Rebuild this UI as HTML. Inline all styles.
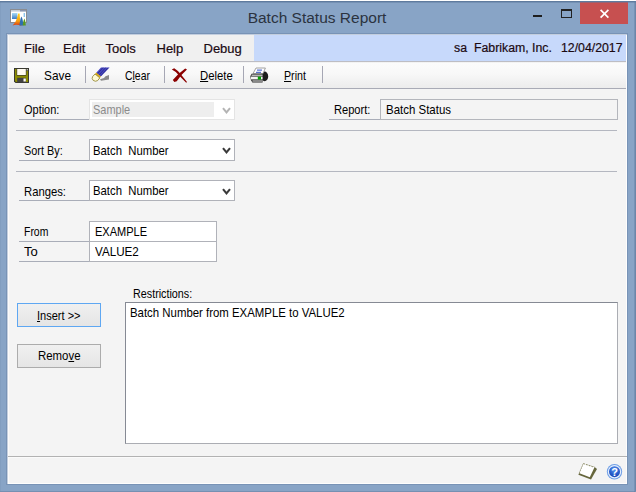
<!DOCTYPE html>
<html>
<head>
<meta charset="utf-8">
<title>Batch Status Report</title>
<style>
html,body{margin:0;padding:0;}
body{width:636px;height:492px;overflow:hidden;background:#88a4c6;font-family:"Liberation Sans",sans-serif;font-size:11px;color:#000;position:relative;}
.abs{position:absolute;}
#title{position:absolute;left:0;top:0;width:636px;height:34px;}
#title .txt{position:absolute;left:-1px;width:636px;top:8px;text-align:center;font-size:15.5px;line-height:20px;color:#2b3340;}
#close{position:absolute;left:580px;top:2px;width:48px;height:22px;background:#c75050;}
#client{position:absolute;left:7px;top:34px;width:620px;height:450px;background:#f4f4f4;overflow:hidden;}
#menubar{position:absolute;left:0;top:0;width:620px;height:27px;background:#f0f0f0;}
#menubar .blue{position:absolute;left:247px;top:0;width:373px;height:27px;background:#c7d9fb;}
.mi{position:absolute;top:7px;font-size:13px;line-height:15px;color:#1b0a12;white-space:nowrap;-webkit-text-stroke:0.2px #1b0a12;}
.ms{font-size:12.3px;}
#toolbar{position:absolute;left:0;top:27px;width:620px;height:26px;background:linear-gradient(#eeeeee 0,#fbfbfb 1.5px,#f8f8f8 45%,#ececec);border-top:1px solid #bdbdc3;border-bottom:1px solid #a9abb6;}
.sep{position:absolute;top:4px;width:1px;height:17px;background:#a6a7b4;}
.t{position:absolute;font-size:13px;line-height:15px;white-space:pre;transform-origin:0 0;z-index:5;}
.uline{position:absolute;height:1px;background:#a9adb8;}
.hr{position:absolute;left:9px;width:601px;height:1px;background:#b4b7c0;}
.fld{position:absolute;background:#fff;border:1px solid #b0b2b9;box-sizing:border-box;font-size:11px;line-height:14px;white-space:nowrap;}
.btn{position:absolute;box-sizing:border-box;border:1px solid #acacac;background:linear-gradient(#f0f0f0,#e5e5e5);font-size:11px;text-align:center;line-height:21px;}
u{text-decoration:underline;}
svg{position:absolute;overflow:visible;}
</style>
</head>
<body>
<div class="abs" style="left:0;top:0;width:636px;height:1px;background:#fff"></div>
<div class="abs" style="left:0;top:1px;width:636px;height:1px;background:#5f7b9e"></div>
<div class="abs" style="left:0;top:2px;width:1px;height:490px;background:#829ec0"></div>
<div class="abs" style="left:635px;top:2px;width:1px;height:490px;background:#6c86a8"></div>
<div class="abs" style="left:0;top:491px;width:636px;height:1px;background:#7690b2"></div>
<div class="abs" style="left:6px;top:33px;width:622px;height:452px;background:#7893b6"></div>
<div class="abs" style="left:0;top:2px;width:636px;height:1px;background:rgba(95,123,158,0.45);z-index:20"></div>
<div class="abs" style="left:634px;top:2px;width:1px;height:490px;background:rgba(95,123,158,0.4);z-index:20"></div>
<div id="title">
  <svg width="18" height="18" viewBox="9 8 18 18" style="left:9px;top:8px">
    <defs>
      <linearGradient id="gb" x1="0" y1="0" x2="0" y2="1"><stop offset="0" stop-color="#a8daf6"/><stop offset="1" stop-color="#3c7cc8"/></linearGradient>
      <linearGradient id="go" x1="0" y1="0" x2="0" y2="1"><stop offset="0" stop-color="#ffd21e"/><stop offset="0.6" stop-color="#f6a010"/><stop offset="1" stop-color="#d83010"/></linearGradient>
    </defs>
    <rect x="10.5" y="9.5" width="16" height="13" fill="#fff" stroke="#8a8c90"/>
    <rect x="11" y="10" width="15" height="1.6" fill="#c4ccd8"/>
    <rect x="20" y="10" width="6" height="1.4" fill="#8a96b0"/>
    <rect x="12" y="13" width="5.4" height="6" fill="url(#gb)"/>
    <rect x="23.6" y="13" width="1.4" height="4" fill="#8cc4ee"/>
    <path d="M12.6 25.6 Q16.5 22 18.2 13.6 L19.6 13.6 Q19.6 20 21.5 25.8 Q16 23.6 12.6 25.6 Z" fill="url(#go)"/>
    <path d="M19.4 25.6 Q20 19 21.4 16.4 Q23 19 23.4 25.6 Z" fill="#2f6fb0"/>
    <path d="M22.6 25.6 Q23.2 20.6 24.4 18.6 Q25.6 20.6 25.8 25.6 Z" fill="#5a9a22"/>
  </svg>

  <div class="txt">Batch Status Report</div>
  <div class="abs" style="left:533px;top:15px;width:9px;height:2px;background:#1e1e1e"></div>
  <div class="abs" style="left:561px;top:9px;width:9px;height:6px;border:1px solid #222;border-top-width:2px"></div>
  <div id="close"><svg width="48" height="22" viewBox="0 0 48 22" style="left:0;top:0"><path d="M20.6 7.9 L28.4 15.7 M28.4 7.9 L20.6 15.7" stroke="#fff" stroke-width="1.7" fill="none"/></svg></div>
</div>
<div id="client">
  <div id="menubar">
    <div class="blue"></div>
    <div class="mi" style="left:17px">File</div>
    <div class="mi" style="left:56px">Edit</div>
    <div class="mi" style="left:98.5px">Tools</div>
    <div class="mi" style="left:149.5px">Help</div>
    <div class="mi" style="left:196.5px">Debug</div>
    <div class="mi ms" style="left:447px">sa</div><div class="mi ms" style="left:467px">Fabrikam, Inc.</div><div class="mi ms" style="left:554px">12/04/2017</div>
  </div>
  <div id="toolbar">
    <svg width="15" height="15" viewBox="0 0 15 15" style="left:7px;top:6px">
      <path d="M0 0 H15 V15 H1.5 L0 13.5 Z" fill="#3a3a32"/>
      <path d="M1 1 H14 V14 H2 L1 13 Z" fill="#8c8c00"/>
      <rect x="2.5" y="1" width="10" height="6.5" fill="#4a4a30"/><rect x="3.2" y="1" width="8.6" height="6" fill="#fffbf0"/>
      <rect x="3" y="7" width="9" height="1" fill="#55551a"/>
      <rect x="3.2" y="9.8" width="8.8" height="4.4" fill="#414141"/>
      <rect x="9.5" y="10.5" width="2.3" height="3" fill="#fffbf0"/>
      <rect x="12.2" y="1" width="1.9" height="1.9" fill="#3a3a32"/><rect x="12.7" y="1.2" width="1.1" height="1.1" fill="#fff"/>
    </svg>
    <svg width="19" height="16" viewBox="91 66 19 16" style="left:84px;top:4px">
      <path d="M100 79.2 L104 78 L105.5 76.2 L109 75 L109 79.6 L101 80.8 Z" fill="#8a8a8a"/>
      <path d="M101 67.4 L109.6 67.4 L100.6 76.8 L96 73 Z" fill="#4646c4"/>
      <path d="M103 67.6 L97.6 73.6 M105.6 67.6 L99 75.2 M108 67.8 L100.6 76" stroke="#2a2a78" stroke-width="0.7" fill="none"/>
      <path d="M96.2 72.6 L100.9 76.6 L99.8 77.9 L95 74 Z" fill="#e2b010"/>
      <path d="M95 74 L99.8 77.9 L97.6 80.6 Q95.5 82 93.2 80.4 Q91.4 78.6 92.6 76.6 Z" fill="#fffbd2" stroke="#8a7c28" stroke-width="0.8"/>
    </svg>
    <svg width="17" height="16" viewBox="171 67 17 16" style="left:164px;top:5px">
      <path d="M171.8 69.6 L174.2 68.2 Q178 70.5 180.2 73.6 L187 82 L186.2 82.8 L179 75.6 Q176 71.5 171.8 69.6 Z" fill="#8b0000"/>
      <path d="M185.2 68.4 L187 69.4 Q181 74.5 176.8 81.2 L174.4 82 L172.8 80 Q178 73.5 185.2 68.4 Z" fill="#8b0000"/>
    </svg>
    <svg width="19" height="16" viewBox="250 67 19 16" style="left:243px;top:5px">
      <ellipse cx="264.6" cy="76.4" rx="3.6" ry="4.8" fill="#1c1c1c"/>
      <path d="M256 68 L265.4 68 L263 73.6 L253 73.6 Z" fill="#fff" stroke="#8c8c8c" stroke-width="0.8"/>
      <rect x="257" y="69.6" width="5" height="1" fill="#3050c8"/>
      <rect x="256" y="71.8" width="5" height="1" fill="#3050c8"/>
      <path d="M251.6 73.8 H262.6 V82.4 H252.4 Q250.2 80 250.4 76 Z" fill="#2a2a2a"/>
      <rect x="251.6" y="74.6" width="11" height="1.2" fill="#d8d8d8"/>
      <rect x="251" y="76.6" width="11.6" height="2.8" fill="#f4f4f4"/>
      <rect x="252.4" y="80.4" width="10" height="1.2" fill="#c8c8c8"/>
      <rect x="257.8" y="76.6" width="3.2" height="3" fill="#00a000"/>
    </svg>
    <div class="sep" style="left:78px"></div>
    <div class="sep" style="left:157px"></div>
    <div class="sep" style="left:236px"></div>
    <div class="sep" style="left:315px"></div>
  </div>

  <!-- Option row -->
  <div class="uline" style="left:12px;top:85px;width:70px"></div>
  <div class="fld" style="left:82px;top:65px;width:146px;height:21px;border-color:#e4e4e4;color:#8a8a8a">
    <div class="abs" style="left:2px;top:2px;width:122px;height:15px;background:#eeeeee"></div>
    
    <svg width="9" height="8" viewBox="0 0 9 8" style="left:132px;top:6.5px"><path d="M1 1.2 L4.5 5.4 L8 1.2" stroke="#b4b4b4" stroke-width="2" fill="none"/></svg>
  </div>
  <div class="uline" style="left:322px;top:85px;width:51px"></div>
  <div class="fld" style="left:373px;top:65px;width:238px;height:21px;background:#f4f4f4;border-color:#b4b6bc"></div>

  <div class="hr" style="top:96px"></div>

  <!-- Sort By -->
  <div class="uline" style="left:12px;top:126px;width:70px"></div>
  <div class="fld" style="left:82px;top:105px;width:146px;height:22px">
    
    <svg width="9" height="8" viewBox="0 0 9 8" style="left:132px;top:6.5px"><path d="M1 1.2 L4.5 5.4 L8 1.2" stroke="#3a3a3a" stroke-width="2.1" fill="none"/></svg>
  </div>

  <div class="hr" style="top:137px"></div>

  <!-- Ranges -->
  <div class="uline" style="left:12px;top:166px;width:70px"></div>
  <div class="fld" style="left:82px;top:146px;width:146px;height:21px">
    
    <svg width="9" height="8" viewBox="0 0 9 8" style="left:132px;top:6.5px"><path d="M1 1.2 L4.5 5.4 L8 1.2" stroke="#3a3a3a" stroke-width="2.1" fill="none"/></svg>
  </div>

  <!-- From / To -->
  <div class="uline" style="left:12px;top:207px;width:70px"></div>
  <div class="uline" style="left:12px;top:227px;width:70px"></div>
  <div class="fld" style="left:82px;top:187px;width:128px;height:21px"></div>
  <div class="fld" style="left:82px;top:207px;width:128px;height:21px"></div>

  <!-- Buttons -->
  <div class="btn" style="left:10px;top:269px;width:84px;height:24px;border-color:#5ea7f2"></div>
  <div class="btn" style="left:10px;top:310px;width:84px;height:24px"></div>

  <!-- Restrictions -->
  <div class="fld" style="left:118px;top:268px;width:493px;height:142px;border-color:#868a94 #abadb3 #abadb3 #868a94"></div>

  <span class="t" style="left:37.3px;top:33.5px;transform:scaleX(0.911);">Save</span>
  <span class="t" style="left:117.7px;top:33.5px;transform:scaleX(0.804);">C<u>l</u>ear</span>
  <span class="t" style="left:192.6px;top:33.5px;transform:scaleX(0.870);"><u>D</u>elete</span>
  <span class="t" style="left:277.3px;top:33.5px;transform:scaleX(0.819);"><u>P</u>rint</span>
  <span class="t" style="left:17.1px;top:68.2px;transform:scaleX(0.844);">Option:</span>
  <span class="t" style="left:85.6px;top:67.5px;transform:scaleX(0.844);color:#8c8c8c">Sample</span>
  <span class="t" style="left:326.6px;top:68.2px;transform:scaleX(0.854);">Report:</span>
  <span class="t" style="left:379.0px;top:67.5px;transform:scaleX(0.882);">Batch Status</span>
  <span class="t" style="left:17.3px;top:109.1px;transform:scaleX(0.837);">Sort By:</span>
  <span class="t" style="left:85.7px;top:108.5px;transform:scaleX(0.871);">Batch&nbsp; Number</span>
  <span class="t" style="left:17.3px;top:149.5px;transform:scaleX(0.867);">Ranges:</span>
  <span class="t" style="left:85.7px;top:148.9px;transform:scaleX(0.871);">Batch&nbsp; Number</span>
  <span class="t" style="left:17.3px;top:190.2px;transform:scaleX(0.804);">From</span>
  <span class="t" style="left:17.3px;top:210.3px;transform:scaleX(1.005);">To</span>
  <span class="t" style="left:87.7px;top:189.5px;transform:scaleX(0.848);">EXAMPLE</span>
  <span class="t" style="left:87.7px;top:209.7px;transform:scaleX(0.896);">VALUE2</span>
  <span class="t" style="left:125.5px;top:251.5px;transform:scaleX(0.828);">Restrictions:</span>
  <span class="t" style="left:122.6px;top:271.1px;transform:scaleX(0.877);">Batch Number from EXAMPLE to VALUE2</span>
  <span class="t" style="left:29.5px;top:273.5px;transform:scaleX(0.848);"><u>I</u>nsert &gt;&gt;</span>
  <span class="t" style="left:31.0px;top:314.1px;transform:scaleX(0.878);">Remo<u>v</u>e</span>
  <!-- status bar -->
  <svg width="22" height="18" viewBox="577 462 22 18" style="left:570px;top:428px">
    <path d="M583.2 463.6 L594.4 466.8 L597 469 L591 479.6 L578.4 474.8 Z" fill="#66663c"/>
    <path d="M583.4 463.4 L594.6 467 L589.8 477.2 L579.4 473.2 Z" fill="#ffffff"/>
    <path d="M583.4 463.6 L594 467.2" stroke="#77774a" stroke-width="0.8" stroke-dasharray="1.6 1.2" fill="none"/>
    <path d="M583.2 463.8 L579.2 473.2" stroke="#9a9a78" stroke-width="0.6" stroke-dasharray="1.2 1" fill="none"/>
  </svg>
  <svg width="17" height="17" viewBox="606 462.5 17 17" style="left:599px;top:428.5px">
    <defs><radialGradient id="gh" cx="0.5" cy="0.3" r="0.8"><stop offset="0" stop-color="#5a96f0"/><stop offset="0.6" stop-color="#2458c8"/><stop offset="1" stop-color="#1a44b0"/></radialGradient></defs>
    <circle cx="614.5" cy="471.2" r="7.7" fill="#6f9fe6"/>
    <circle cx="614.5" cy="471.2" r="6.7" fill="#e6effc"/>
    <circle cx="614.5" cy="471.2" r="5.5" fill="url(#gh)"/>
    <text x="614.5" y="475.2" text-anchor="middle" font-family="Liberation Sans, sans-serif" font-weight="bold" font-size="11" fill="#fff">?</text>
  </svg>

  <div class="abs" style="left:0;top:422px;width:620px;height:1px;background:#b2b2b2;z-index:9"></div>
  <div class="abs" style="left:0;top:423px;width:620px;height:1px;background:#fafafa"></div>

  <div class="abs" style="left:619px;top:0;width:1px;height:450px;background:#fdfdfd;z-index:8"></div>
  <div class="abs" style="left:0;top:449px;width:620px;height:1px;background:#fdfdfd;z-index:8"></div>
  <div class="abs" style="left:0;top:0;width:1px;height:450px;background:#c3cede;z-index:9"></div>
  <div class="abs" style="left:0;top:0;width:620px;height:1px;background:#c3cede;z-index:9"></div>
  <div class="abs" style="left:1px;top:1px;width:1px;height:449px;background:rgba(255,255,255,0.6);z-index:8"></div>
</div>
</body>
</html>
